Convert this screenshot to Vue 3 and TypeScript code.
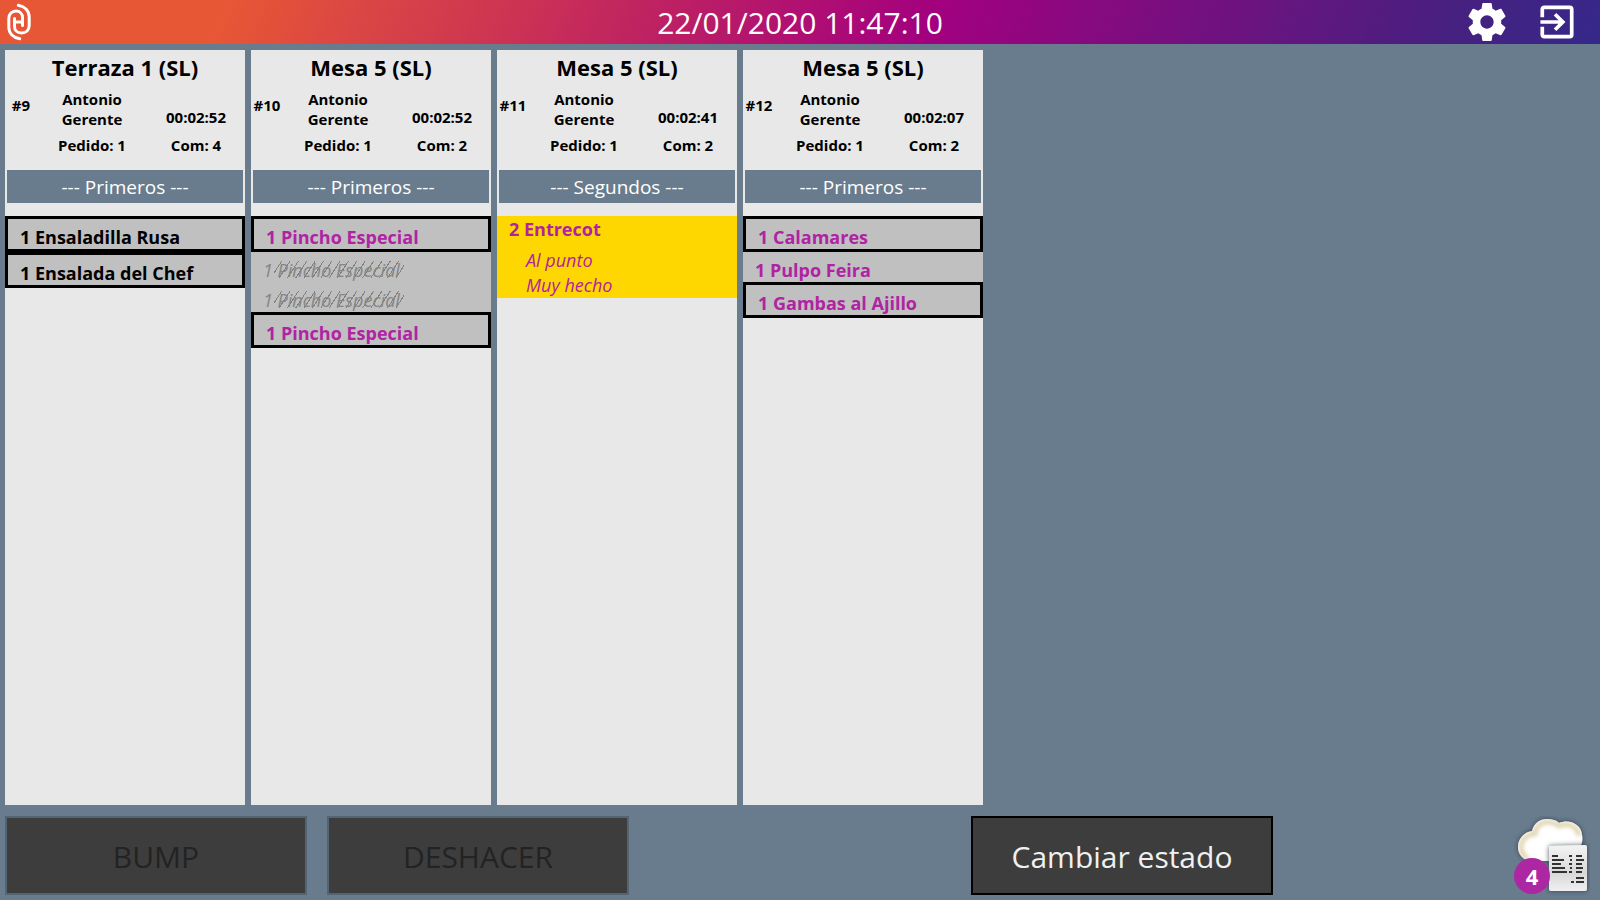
<script setup lang="ts">
import { computed } from 'vue'

interface Item {
  qty: number
  name: string
  boxed?: boolean
  tone: 'dark' | 'purple' | 'done'
  highlight?: boolean
  notes?: string[]
}

interface Order {
  id: number
  table: string
  time: string
  guests: number
  course: string
  items: Item[]
}

const orders: Order[] = [
  {
    id: 9, table: 'Terraza 1 (SL)', time: '00:02:52', guests: 4, course: 'Primeros',
    items: [
      { qty: 1, name: 'Ensaladilla Rusa', boxed: true, tone: 'dark' },
      { qty: 1, name: 'Ensalada del Chef', boxed: true, tone: 'dark' },
    ],
  },
  {
    id: 10, table: 'Mesa 5 (SL)', time: '00:02:52', guests: 2, course: 'Primeros',
    items: [
      { qty: 1, name: 'Pincho Especial', boxed: true, tone: 'purple' },
      { qty: 1, name: 'Pincho Especial', tone: 'done' },
      { qty: 1, name: 'Pincho Especial', tone: 'done' },
      { qty: 1, name: 'Pincho Especial', boxed: true, tone: 'purple' },
    ],
  },
  {
    id: 11, table: 'Mesa 5 (SL)', time: '00:02:41', guests: 2, course: 'Segundos',
    items: [
      { qty: 2, name: 'Entrecot', tone: 'purple', highlight: true, notes: ['Al punto', 'Muy hecho'] },
    ],
  },
  {
    id: 12, table: 'Mesa 5 (SL)', time: '00:02:07', guests: 2, course: 'Primeros',
    items: [
      { qty: 1, name: 'Calamares', boxed: true, tone: 'purple' },
      { qty: 1, name: 'Pulpo Feira', tone: 'purple' },
      { qty: 1, name: 'Gambas al Ajillo', boxed: true, tone: 'purple' },
    ],
  },
]

const pending = computed(() => orders.length)

function itemClasses(item: Item) {
  return [item.tone, { boxed: item.boxed, highlight: item.highlight }]
}
</script>

<template>
  <div class="screen">
    <header class="topbar">
      <svg class="logo" viewBox="7 3 24 38" aria-hidden="true">
        <g fill="none" stroke="#fff" stroke-width="3" stroke-linecap="round">
          <path d="M18.300 5.200C25 6.500 29.200 11 29.200 17V25.500C29.200 30 26 33 21.500 33C17 33 14.500 30 14.500 26.500V18.500" />
          <path d="M19.700 38.800C13 37.500 8.800 33 8.800 27V18.500C8.800 14 12 11 16 11C20 11 22.500 14 22.500 17.500V25.500" />
          <path d="M14.500 22H22.500" />
        </g>
      </svg>
      <time class="clock">22/01/2020 11:47:10</time>
      <div class="tools">
        <button type="button" class="icon" aria-label="Ajustes">
          <svg viewBox="2 2 20 20">
            <path fill="#fff" d="M19.430 12.980c.040-.320.070-.640.070-.980s-.030-.660-.070-.980l2.110-1.650c.190-.150.240-.420.120-.640l-2-3.460c-.120-.220-.390-.300-.610-.220l-2.490 1c-.520-.400-1.080-.730-1.690-.980l-.380-2.650C14.460 2.180 14.250 2 14 2h-4c-.250 0-.460.180-.490.420l-.380 2.650c-.610.250-1.170.590-1.690.980l-2.490-1c-.230-.090-.490 0-.610.220l-2 3.460c-.130.220-.070.490.120.640l2.110 1.650c-.040.320-.070.650-.070.980s.030.660.070.980l-2.110 1.650c-.190.150-.240.420-.120.640l2 3.460c.120.220.390.300.610.220l2.490-1c.520.400 1.080.730 1.690.980l.380 2.650c.030.240.240.420.490.420h4c.250 0 .460-.180.490-.420l.380-2.650c.610-.250 1.170-.590 1.690-.980l2.490 1c.230.090.490 0 .610-.220l2-3.460c.120-.220.070-.490-.120-.640l-2.110-1.650zM12 15.500c-1.930 0-3.500-1.570-3.500-3.500s1.570-3.500 3.500-3.500 3.500 1.570 3.500 3.500-1.570 3.500-3.500 3.500z" />
          </svg>
        </button>
        <button type="button" class="icon" aria-label="Salir">
          <svg viewBox="-1 -1 39 39">
            <g fill="none" stroke="#fff" stroke-width="3.800">
              <path d="M3.400 13.500V5.400a2 2 0 0 1 2-2H31.600a2 2 0 0 1 2 2V31.600a2 2 0 0 1-2 2H5.400a2 2 0 0 1-2-2V23.500" />
              <path d="M1.500 18.500H25M16.500 10.500L24.500 18.500L16.500 26.500" />
            </g>
          </svg>
        </button>
      </div>
    </header>

    <main class="board">
      <article v-for="order in orders" :key="order.id" class="card">
        <h2 class="table-name">{{ order.table }}</h2>
        <div class="meta">
          <span class="number">#{{ order.id }}</span>
          <span class="waiter">Antonio<br>Gerente</span>
          <span class="elapsed">{{ order.time }}</span>
          <span class="round">Pedido: 1</span>
          <span class="guests">Com: {{ order.guests }}</span>
        </div>
        <h3 class="course">--- {{ order.course }} ---</h3>
        <ul class="items">
          <li v-for="(item, i) in order.items" :key="i" class="item" :class="itemClasses(item)">
            <div class="line">{{ item.qty }} <span class="name">{{ item.name }}</span></div>
            <ul v-if="item.notes" class="notes">
              <li v-for="note in item.notes" :key="note">{{ note }}</li>
            </ul>
          </li>
        </ul>
      </article>
    </main>

    <footer class="actions">
      <button type="button" class="action" disabled>BUMP</button>
      <button type="button" class="action" disabled>DESHACER</button>
      <button type="button" class="action state">Cambiar estado</button>
      <div class="sync">
        <svg viewBox="0 2 76 80" aria-hidden="true">
          <defs>
            <filter id="shade" x="-20%" y="-20%" width="140%" height="140%">
              <feDropShadow dx="0" dy="0" stdDeviation="2.500" flood-color="#26323c" flood-opacity="0.800" />
            </filter>
            <filter id="soft"><feGaussianBlur stdDeviation="2" /></filter>
            <filter id="print"><feGaussianBlur stdDeviation="0.700" /></filter>
            <linearGradient id="paper" x1="0" y1="0" x2="0" y2="1">
              <stop offset="0" stop-color="#f4f4f4" />
              <stop offset="0.600" stop-color="#d8d8d8" />
              <stop offset="1" stop-color="#f0f0f0" />
            </linearGradient>
            <clipPath id="cloud-clip">
              <path d="M16 47C9 46 4 40 4 33C4 25 10 18 18 17C20 9 26 5 33 5C38 5 42 6 45 9C54 5 67 9 68 21C69 26 68 30 66 33V47Z" />
            </clipPath>
          </defs>
          <path filter="url(#shade)" fill="#fff" d="M16 47C9 46 4 40 4 33C4 25 10 18 18 17C20 9 26 5 33 5C38 5 42 6 45 9C54 5 67 9 68 21C69 26 68 30 66 33V47Z" />
          <g clip-path="url(#cloud-clip)">
            <path filter="url(#soft)" fill="none" stroke="#d9cca0" stroke-width="4" d="M14 45C9 42 7 38 7 33C7 26 13 20 21 20C22 12 27 8 33 8C38 8 42 9 45 12C53 8 64 12 65 22" />
          </g>
          <path filter="url(#shade)" fill="url(#paper)" d="M36 32L71 31Q73 31 73 33V75Q73 77 71 77H37Q35 77 35 75V33Z" />
          <path filter="url(#print)" fill="none" stroke="#333" stroke-width="2" d="M38 42H44M38 46H50M38 50H47M38 54H51M38 58H53M55 42H58M56 46H58M55 50H58M56 54H58M55 58H58M62 42H68M62 46H70M62 50H68M62 54H69M62 58H68M62 64H70M57 68H60M62 68H70" />
        </svg>
        <span class="badge">{{ pending }}</span>
      </div>
    </footer>
  </div>
</template>

<style>
html,
body {
  margin: 0;
}
</style>

<style scoped>
.screen {
  display: flex;
  flex-direction: column;
  min-height: 100vh;
  box-sizing: border-box;
  background: #697c8d;
  color: #000;
  font-family: "Open Sans", "Noto Sans", sans-serif;
}

.topbar {
  display: grid;
  grid-template-columns: 1fr auto 1fr;
  align-items: center;
  height: 44px;
  padding: 0 7px;
  background: linear-gradient(115deg, #e85735 14%, #a3007f 58%, #47207f 90%, #35298a 100%);
  color: #fff;
}

.logo {
  width: 24px;
  height: 38px;
}

.clock {
  padding-top: 2px;
  font-size: 30px;
  line-height: 42px;
}

.tools {
  display: flex;
  justify-content: flex-end;
  gap: 32px;
  padding-right: 17px;
}

.icon {
  width: 38px;
  height: 38px;
  padding: 0;
  border: 0;
  background: none;
}

.icon svg {
  display: block;
  width: 100%;
  height: 100%;
}

.board {
  flex: 1;
  display: grid;
  grid-template-columns: repeat(4, 15%);
  gap: 6px;
  padding: 6px 0 11px 5px;
  margin-right: -5px;
}

.card {
  background: #e8e8e8;
}

.table-name {
  margin: 0;
  padding-top: 1px;
  font-size: 22px;
  font-weight: 700;
  line-height: 32px;
  text-align: center;
}

.meta {
  display: grid;
  grid-template-columns: 32px 110fr 98fr;
  grid-template-rows: 46px 26px;
  font-size: 15px;
  font-weight: 700;
  line-height: 20px;
  text-align: center;
  padding-bottom: 15px;
}

.number {
  padding-top: 12px;
}

.waiter {
  padding-top: 6px;
}

.elapsed {
  padding-top: 24px;
}

.round {
  grid-column: 2;
  padding-top: 6px;
}

.guests {
  padding-top: 6px;
}

.course {
  margin: 0 2px 13px;
  padding-top: 1px;
  background: #697c8d;
  color: #fff;
  font-size: 19px;
  font-weight: 400;
  line-height: 32px;
  text-align: center;
}

.items,
.notes {
  list-style: none;
  margin: 0;
  padding: 0;
}

.item {
  padding: 7px 0 0 12px;
  background: #c0c0c0;
  font-size: 18px;
  font-weight: 700;
  line-height: 23px;
}

.boxed {
  border: 3px solid #000;
}

.purple {
  color: #b023a3;
}

.done {
  color: #868686;
  font-style: italic;
  font-weight: 400;
}

.highlight {
  padding-top: 2px;
  background: #ffd700;
}

/* Finished dishes are crossed out with a run of slanted strokes. */
.done .name {
  margin-left: -4px;
  padding: 0 4px;
  background: repeating-linear-gradient(123deg, transparent 0 6px, #808080 6px 7px) center bottom 4px / 100% 17px no-repeat;
}

.notes {
  padding: 7px 0 0 17px;
  font-style: italic;
  font-weight: 400;
  line-height: 25px;
  margin-bottom: -1px;
}

.actions {
  display: grid;
  grid-template-columns: repeat(4, 1fr) 307px;
  gap: 20px;
  height: 79px;
  padding: 0 0 5px 5px;
}

.action {
  padding: 2px 0 0;
  border: 2px solid #556473;
  background: #3d3d3d;
  color: #232323;
  font-family: inherit;
  font-size: 30px;
}

.state {
  grid-column: 4;
  border-color: #000;
  color: #f0f0f0;
}

.sync {
  position: relative;
  justify-self: end;
  width: 76px;
  height: 79px;
  margin-right: 10px;
}

.sync svg {
  display: block;
  width: 76px;
  height: 80px;
}

.badge {
  position: absolute;
  left: 0;
  bottom: 1px;
  width: 36px;
  height: 36px;
  border-radius: 50%;
  background: #ac27a2;
  color: #fff;
  font-size: 22px;
  font-weight: 700;
  line-height: 37px;
  text-align: center;
}
</style>
